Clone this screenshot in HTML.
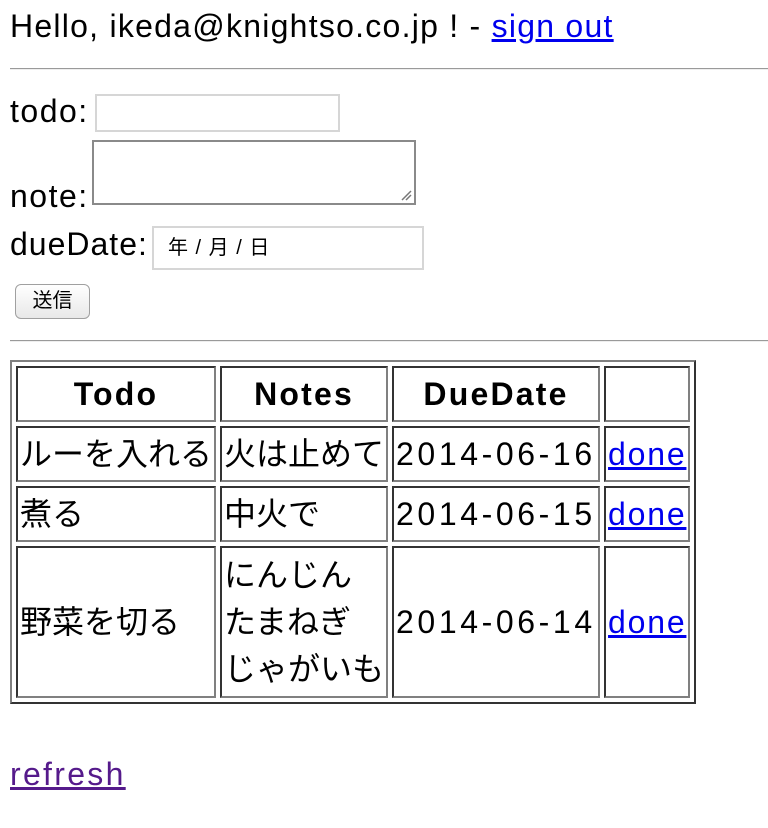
<!DOCTYPE html>
<html><head><meta charset="utf-8"><style>
html,body{margin:0;padding:0;background:#fff;width:768px;height:828px;overflow:hidden}
body{font-family:"Liberation Sans","Noto Sans CJK JP",sans-serif;font-size:32px;color:#000;position:relative}
.a{position:absolute;white-space:nowrap;line-height:36px}
a{color:#0000ee}
.hr{position:absolute;left:10px;width:758px;height:0;border-top:1px solid #9a9a9a;border-bottom:1px solid #eee}
.box{position:absolute;box-sizing:border-box;background:#fff}
table{position:absolute;left:10px;top:360px;border-collapse:separate;border-spacing:4px;border:2px solid;border-color:#808080 #333 #333 #808080}
td,th{box-sizing:border-box;border:2px solid;border-color:#333 #808080 #808080 #333;padding:0 2px;font-size:32px;line-height:36px;white-space:nowrap}
th{font-weight:bold;text-align:center;letter-spacing:2.2px}
td{text-align:left}
.d{letter-spacing:3.6px}
.dn{letter-spacing:1.8px}
</style></head><body>
<div class="a" style="left:10px;top:8px;letter-spacing:1.25px">Hello, ikeda@knightso.co.jp ! - <a href="#">sign out</a></div>
<div class="hr" style="top:68px"></div>
<div class="a" style="left:10px;top:93px;letter-spacing:1.5px">todo:</div>
<div class="box" style="left:95px;top:94px;width:245px;height:38px;border:2px solid #d6d6d6"></div>
<div class="a" style="left:10px;top:178px;letter-spacing:1.5px">note:</div>
<div class="box" style="left:92px;top:140px;width:324px;height:65px;border:2px solid #8a8a8a">
<svg style="position:absolute;right:2px;bottom:2px" width="12" height="12"><path d="M2 11L11 2M6 11L11 6" stroke="#777" stroke-width="1.5"/></svg></div>
<div class="a" style="left:10px;top:226px;letter-spacing:1px">dueDate:</div>
<div class="box" style="left:152px;top:226px;width:272px;height:44px;border:2px solid #d6d6d6;font-size:20px;line-height:40px;padding-left:14px;letter-spacing:1px">年 / 月 / 日</div>
<div class="box" style="left:15px;top:284px;width:75px;height:35px;border:1px solid #a0a0a0;border-radius:6px;background:linear-gradient(#fff,#e8e8e8);font-size:20px;text-align:center;line-height:33px">送信</div>
<div class="hr" style="top:340px"></div>
<table>
<tr style="height:56px"><th style="width:200px">Todo</th><th style="width:168px">Notes</th><th style="width:208px">DueDate</th><th style="width:86px"></th></tr>
<tr style="height:56px"><td>ルーを入れる</td><td>火は止めて</td><td class="d">2014-06-16</td><td class="dn"><a href="#">done</a></td></tr>
<tr style="height:56px"><td>煮る</td><td>中火で</td><td class="d">2014-06-15</td><td class="dn"><a href="#">done</a></td></tr>
<tr style="height:152px"><td>野菜を切る</td><td style="line-height:47px">にんじん<br>たまねぎ<br>じゃがいも</td><td class="d">2014-06-14</td><td class="dn"><a href="#">done</a></td></tr>
</table>
<div class="a" style="left:10px;top:756px;letter-spacing:2.3px"><a href="#" style="color:#551a8b">refresh</a></div>
</body></html>
